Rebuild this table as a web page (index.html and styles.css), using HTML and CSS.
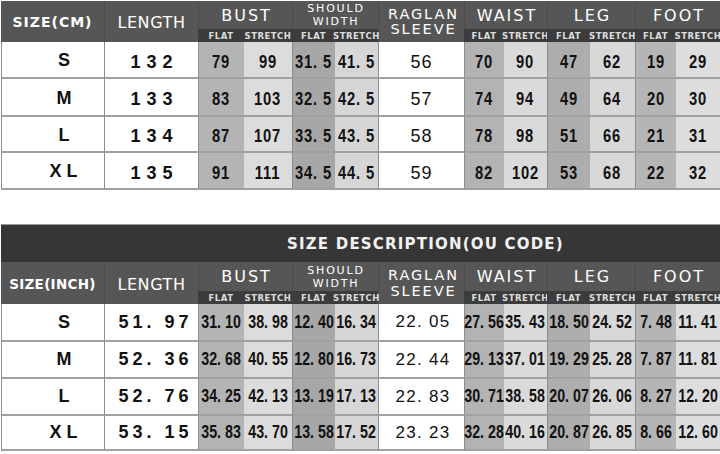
FILE: index.html
```html
<!DOCTYPE html>
<html>
<head>
<meta charset="utf-8">
<link rel="stylesheet" href="styles.css">
</head>
<body>
<div class="page">
  <div class="chart t1">
    <div class="hd h-size">SIZE(CM)</div>
    <div class="hd h-len">LENGTH</div>
    <div class="hd h-grp c-bust">BUST</div>
    <div class="hd h-should c-should"><span class="ln1">SHOULD</span><span class="ln1">WIDTH</span></div>
    <div class="hd h-rag"><span class="ln2">RAGLAN</span><span class="ln2">SLEEVE</span></div>
    <div class="hd h-grp c-waist">WAIST</div>
    <div class="hd h-grp c-leg">LEG</div>
    <div class="hd h-grp c-foot">FOOT</div>
    <div class="sub">FLAT</div><div class="sub">STRETCH</div>
    <div class="sub">FLAT</div><div class="sub">STRETCH</div>
    <div class="sub">FLAT</div><div class="sub">STRETCH</div>
    <div class="sub">FLAT</div><div class="sub">STRETCH</div>
    <div class="sub">FLAT</div><div class="sub">STRETCH</div>

    <div class="c sz">S</div><div class="c ln g">132</div>
    <div class="c b1 g"><span>79</span></div><div class="c b2"><span>99</span></div>
    <div class="c s1 g"><span>31. 5</span></div><div class="c s2"><span>41. 5</span></div>
    <div class="c rg g">56</div>
    <div class="c w1 g"><span>70</span></div><div class="c w2"><span>90</span></div>
    <div class="c l1 g"><span>47</span></div><div class="c l2"><span>62</span></div>
    <div class="c f1 g"><span>19</span></div><div class="c f2"><span>29</span></div>

    <div class="c sz">M</div><div class="c ln g">133</div>
    <div class="c b1 g"><span>83</span></div><div class="c b2"><span>103</span></div>
    <div class="c s1 g"><span>32. 5</span></div><div class="c s2"><span>42. 5</span></div>
    <div class="c rg g">57</div>
    <div class="c w1 g"><span>74</span></div><div class="c w2"><span>94</span></div>
    <div class="c l1 g"><span>49</span></div><div class="c l2"><span>64</span></div>
    <div class="c f1 g"><span>20</span></div><div class="c f2"><span>30</span></div>

    <div class="c sz">L</div><div class="c ln g">134</div>
    <div class="c b1 g"><span>87</span></div><div class="c b2"><span>107</span></div>
    <div class="c s1 g"><span>33. 5</span></div><div class="c s2"><span>43. 5</span></div>
    <div class="c rg g">58</div>
    <div class="c w1 g"><span>78</span></div><div class="c w2"><span>98</span></div>
    <div class="c l1 g"><span>51</span></div><div class="c l2"><span>66</span></div>
    <div class="c f1 g"><span>21</span></div><div class="c f2"><span>31</span></div>

    <div class="c sz xl">XL</div><div class="c ln g">135</div>
    <div class="c b1 g"><span>91</span></div><div class="c b2"><span>111</span></div>
    <div class="c s1 g"><span>34. 5</span></div><div class="c s2"><span>44. 5</span></div>
    <div class="c rg g">59</div>
    <div class="c w1 g"><span>82</span></div><div class="c w2"><span>102</span></div>
    <div class="c l1 g"><span>53</span></div><div class="c l2"><span>68</span></div>
    <div class="c f1 g"><span>22</span></div><div class="c f2"><span>32</span></div>
  </div>

  <div class="title">SIZE DESCRIPTION(OU CODE)</div>
  <div class="chart t2">
    <div class="hd h-size">SIZE(INCH)</div>
    <div class="hd h-len">LENGTH</div>
    <div class="hd h-grp c-bust">BUST</div>
    <div class="hd h-should c-should"><span class="ln1">SHOULD</span><span class="ln1">WIDTH</span></div>
    <div class="hd h-rag"><span class="ln2">RAGLAN</span><span class="ln2">SLEEVE</span></div>
    <div class="hd h-grp c-waist">WAIST</div>
    <div class="hd h-grp c-leg">LEG</div>
    <div class="hd h-grp c-foot">FOOT</div>
    <div class="sub">FLAT</div><div class="sub">STRETCH</div>
    <div class="sub">FLAT</div><div class="sub">STRETCH</div>
    <div class="sub">FLAT</div><div class="sub">STRETCH</div>
    <div class="sub">FLAT</div><div class="sub">STRETCH</div>
    <div class="sub">FLAT</div><div class="sub">STRETCH</div>

    <div class="c sz">S</div><div class="c ln g">51. 97</div>
    <div class="c b1 g"><span>31. 10</span></div><div class="c b2"><span>38. 98</span></div>
    <div class="c s1 g"><span>12. 40</span></div><div class="c s2"><span>16. 34</span></div>
    <div class="c rg g">22. 05</div>
    <div class="c w1 g"><span>27. 56</span></div><div class="c w2"><span>35. 43</span></div>
    <div class="c l1 g"><span>18. 50</span></div><div class="c l2"><span>24. 52</span></div>
    <div class="c f1 g"><span>7. 48</span></div><div class="c f2"><span>11. 41</span></div>

    <div class="c sz">M</div><div class="c ln g">52. 36</div>
    <div class="c b1 g"><span>32. 68</span></div><div class="c b2"><span>40. 55</span></div>
    <div class="c s1 g"><span>12. 80</span></div><div class="c s2"><span>16. 73</span></div>
    <div class="c rg g">22. 44</div>
    <div class="c w1 g"><span>29. 13</span></div><div class="c w2"><span>37. 01</span></div>
    <div class="c l1 g"><span>19. 29</span></div><div class="c l2"><span>25. 28</span></div>
    <div class="c f1 g"><span>7. 87</span></div><div class="c f2"><span>11. 81</span></div>

    <div class="c sz">L</div><div class="c ln g">52. 76</div>
    <div class="c b1 g"><span>34. 25</span></div><div class="c b2"><span>42. 13</span></div>
    <div class="c s1 g"><span>13. 19</span></div><div class="c s2"><span>17. 13</span></div>
    <div class="c rg g">22. 83</div>
    <div class="c w1 g"><span>30. 71</span></div><div class="c w2"><span>38. 58</span></div>
    <div class="c l1 g"><span>20. 07</span></div><div class="c l2"><span>26. 06</span></div>
    <div class="c f1 g"><span>8. 27</span></div><div class="c f2"><span>12. 20</span></div>

    <div class="c sz xl">XL</div><div class="c ln g">53. 15</div>
    <div class="c b1 g"><span>35. 83</span></div><div class="c b2"><span>43. 70</span></div>
    <div class="c s1 g"><span>13. 58</span></div><div class="c s2"><span>17. 52</span></div>
    <div class="c rg g">23. 23</div>
    <div class="c w1 g"><span>32. 28</span></div><div class="c w2"><span>40. 16</span></div>
    <div class="c l1 g"><span>20. 87</span></div><div class="c l2"><span>26. 85</span></div>
    <div class="c f1 g"><span>8. 66</span></div><div class="c f2"><span>12. 60</span></div>
  </div>
</div>
</body>
</html>
```

FILE: styles.css
```css
html, body {
  margin: 0;
  padding: 0;
  background: #ffffff;
}
body {
  font-family: "Liberation Sans", Arial, sans-serif;
  color: #111;
  width: 720px;
  height: 454px;
  overflow: hidden;
}
.page {
  padding-top: 1px;
  width: 720px;
}
.chart {
  display: grid;
  margin-left: 1px;
  grid-template-columns: 103px 94px 46px 48px 43px 43px 86px 40px 43px 43px 45px 41px 44px;
}
.t1 {
  grid-template-rows: 28px 13px 37px 38px 36px 37px;
}
.t2 {
  grid-template-rows: 29px 13px 38px 37px 37px 35px;
}

/* header */
.hd {
  background: #565656;
  color: #ffffff;
  font-family: "DejaVu Sans", sans-serif;
  display: flex;
  align-items: center;
  justify-content: center;
  text-align: center;
  border-left: 1px solid #4a4a4a;
  box-sizing: border-box;
  white-space: nowrap;
}
.h-size {
  grid-row: 1 / 3;
  grid-column: 1;
  font-weight: bold;
  font-size: 14px;
  letter-spacing: 1px;
  border-left: none;
  padding-top: 1px;
}
.t2 .h-size {
  font-size: 13.5px;
  letter-spacing: 0.3px;
}
.h-len {
  grid-row: 1 / 3;
  grid-column: 2;
  font-size: 16px;
  letter-spacing: 0.6px;
  padding-top: 2px;
}
.h-grp {
  grid-row: 1;
  font-size: 16px;
  letter-spacing: 2px;
  padding-left: 2px;
}
.h-should {
  grid-row: 1;
  flex-direction: column;
  font-size: 11px;
  letter-spacing: 1.8px;
  padding-left: 1px;
}
.ln1 {
  display: block;
  height: 13px;
  line-height: 13px;
}
.h-rag {
  grid-row: 1 / 3;
  grid-column: 7;
  flex-direction: column;
  font-size: 14.5px;
  letter-spacing: 1.9px;
  padding-left: 4px;
}
.ln2 {
  display: block;
  height: 15px;
  line-height: 15px;
}
.t2 .ln2 {
  height: 16px;
  line-height: 16px;
}
.c-bust { grid-column: 3 / 5; }
.c-should { grid-column: 5 / 7; }
.c-waist { grid-column: 8 / 10; }
.c-leg { grid-column: 10 / 12; }
.c-foot { grid-column: 12 / 14; }

.sub {
  grid-row: 2;
  background: #3c3c3c;
  color: #dedede;
  font-family: "DejaVu Sans", sans-serif;
  font-weight: bold;
  font-size: 8.5px;
  letter-spacing: 0.5px;
  display: flex;
  align-items: center;
  justify-content: center;
  white-space: nowrap;
}

/* title band */
.title {
  margin-top: 34px;
  margin-left: 1px;
  height: 38px;
  box-sizing: border-box;
  border-top: 1px solid #9a9a9a;
  background: #363636;
  color: #f2f2f2;
  font-family: "DejaVu Sans", sans-serif;
  font-weight: bold;
  font-size: 15px;
  letter-spacing: 1.2px;
  display: flex;
  align-items: center;
  padding-left: 286px;
}

/* data cells */
.c {
  display: flex;
  align-items: center;
  justify-content: center;
  box-sizing: border-box;
  border-bottom: 2px solid #a0a0a0;
  background: #ffffff;
  white-space: nowrap;
  font-size: 18px;
}
.t1 .c {
  padding-top: 5px;
}
.g {
  border-left: 1px solid #8c8c8c;
}
.c span {
  display: inline-block;
  font-weight: bold;
  transform: scaleX(0.82);
}
.t1 .c span {
  letter-spacing: 1px;
}
.t2 .c span {
  transform: scaleX(0.79);
}
.sz {
  font-weight: bold;
  font-size: 18px;
  padding-left: 22px;
  border-left: 1px solid #8c8c8c;
}
.t1 .sz {
  padding-top: 2px;
}
.xl {
  letter-spacing: 5px;
  padding-left: 26px;
}
.ln {
  font-weight: bold;
  letter-spacing: 6px;
  padding-left: 6px;
}
.t2 .ln {
  letter-spacing: 4px;
  padding-left: 8px;
}
.rg {
  letter-spacing: 1px;
}
.t2 .rg {
  letter-spacing: 1.3px;
  font-size: 17px;
  padding-left: 3px;
}

.b1 { background: #b4b4b4; }
.b2 { background: #dcdcdc; }
.s1 { background: #a7a7a7; }
.s2 { background: #d6d6d6; }
.w1 { background: #b3b3b3; }
.w2 { background: #dadada; }
.l1 { background: #adadad; }
.l2 { background: #d8d8d8; }
.f1 { background: #b5b5b5; }
.f2 { background: #dddddd; }
```
